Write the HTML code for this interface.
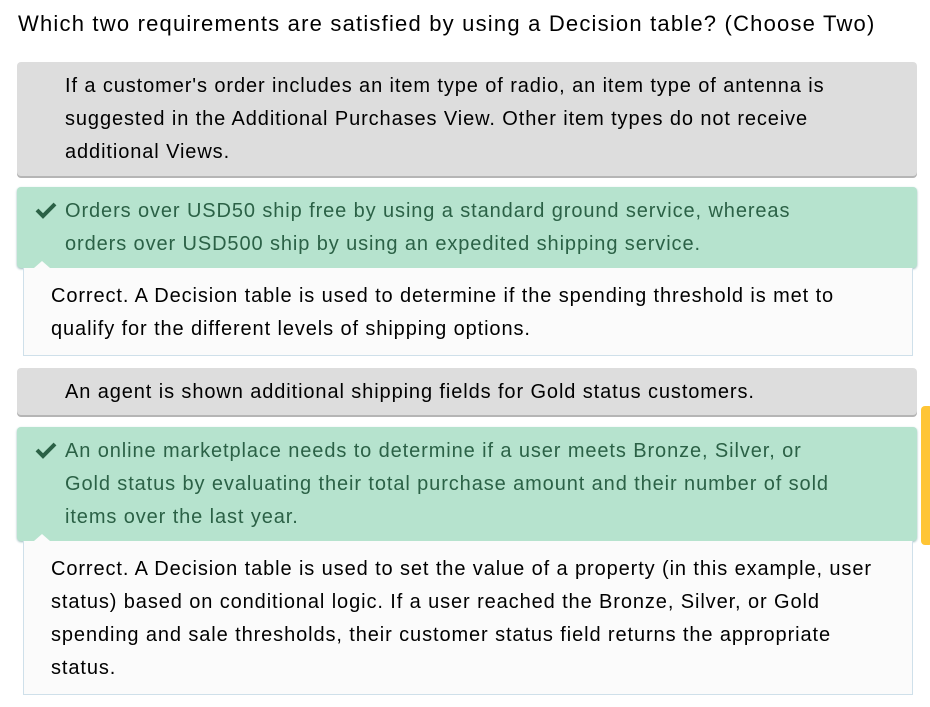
<!DOCTYPE html>
<html><head><meta charset="utf-8"><style>
body{margin:0;background:#fff;font-family:"Liberation Sans",Arial,sans-serif;color:#000;width:930px;height:707px;overflow:hidden;position:relative}
.t{position:absolute;left:18px;top:9px;font-size:22px;line-height:30px;letter-spacing:1.2px;white-space:nowrap}
.o{position:absolute;left:17px;width:900px;box-sizing:border-box;padding:8px 10px 8px 48px;font-size:20px;line-height:33px;border-radius:4px;letter-spacing:0.9px;white-space:nowrap}
.g{background:#dddddd;box-shadow:0 2px 0 #b5b5b5}
.c{background:#b6e3ce;color:#2b6146;box-shadow:0 1px 2px #9bb}
.ck{position:absolute;left:18px;top:12px;width:22px;height:22px}
.e{position:absolute;left:23px;width:890px;box-sizing:border-box;background:#fbfbfb;border:1px solid #cfe0ea;border-top:none;padding:12px 10px 8px 27px;font-size:20px;line-height:33px;letter-spacing:0.9px;white-space:nowrap}
.e:before{content:"";position:absolute;left:10px;top:-7px;border-left:8px solid transparent;border-right:8px solid transparent;border-bottom:7px solid #fbfbfb}
.y{position:absolute;left:921px;top:406px;width:12px;height:139px;background:#ffc535;border-radius:4px}
</style></head><body>
<div class="t">Which two requirements are satisfied by using a Decision table? (Choose Two)</div>
<div class="o g" style="top:62px;height:114px">If a customer's order includes an item type of radio, an item type of antenna is<br>suggested in the Additional Purchases View. Other item types do not receive<br>additional Views.</div>
<div class="o c" style="top:187px;height:81px"><svg class="ck" viewBox="0 0 22 22"><path d="M2 11 L8 17 L20 5" stroke="#2b6146" stroke-width="4" fill="none"/></svg>Orders over USD50 ship free by using a standard ground service, whereas<br>orders over USD500 ship by using an expedited shipping service.</div>
<div class="e" style="top:268px;height:88px">Correct. A Decision table is used to determine if the spending threshold is met to<br>qualify for the different levels of shipping options.</div>
<div class="o g" style="top:368px;height:47px">An agent is shown additional shipping fields for Gold status customers.</div>
<div class="o c" style="top:427px;height:114px"><svg class="ck" viewBox="0 0 22 22"><path d="M2 11 L8 17 L20 5" stroke="#2b6146" stroke-width="4" fill="none"/></svg>An online marketplace needs to determine if a user meets Bronze, Silver, or<br>Gold status by evaluating their total purchase amount and their number of sold<br>items over the last year.</div>
<div class="e" style="top:541px;height:154px">Correct. A Decision table is used to set the value of a property (in this example, user<br>status) based on conditional logic. If a user reached the Bronze, Silver, or Gold<br>spending and sale thresholds, their customer status field returns the appropriate<br>status.</div>
<div class="y"></div>
</body></html>
